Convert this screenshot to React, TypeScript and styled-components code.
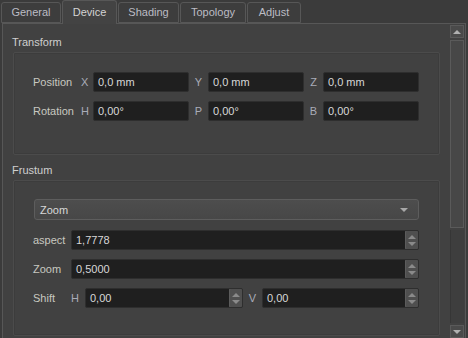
import React from "react";
import styled, { createGlobalStyle } from "styled-components";

const GlobalStyle = createGlobalStyle`
  html, body {
    margin: 0;
    padding: 0;
    background: #3b3b3b;
  }
  body {
    font-family: "Liberation Sans", Arial, sans-serif;
    font-size: 11px;
    color: #c8c8c8;
  }
`;

const TABS = [
  { name: "General", w: 60 },
  { name: "Device", w: 55 },
  { name: "Shading", w: 61 },
  { name: "Topology", w: 66 },
  { name: "Adjust", w: 54 },
];

const Window = styled.div`
  width: 468px;
  height: 338px;
  overflow: hidden;
  background: #3b3b3b;
  display: flex;
  flex-direction: column;
`;

const TabBar = styled.div`
  display: flex;
  align-items: flex-end;
  gap: 1px;
  height: 23px;
  padding-left: 1px;
  position: relative;
  z-index: 1;
`;

const Tab = styled.div<{ $active?: boolean; $w: number }>`
  box-sizing: border-box;
  width: ${p => p.$w}px;
  height: ${p => (p.$active ? 24 : 21)}px;
  padding-top: ${p => (p.$active ? 5 : 3)}px;
  text-align: center;
  border: 1px solid #575757;
  border-bottom: ${p => (p.$active ? "none" : "1px solid #575757")};
  border-radius: 3px 3px 0 0;
  background: ${p => (p.$active ? "#434343" : "#3d3d3d")};
  color: ${p => (p.$active ? "#d4d4d4" : "#bcbcc4")};
  margin-bottom: ${p => (p.$active ? -1 : 0)}px;
`;

const Pane = styled.div`
  box-sizing: border-box;
  margin-left: 2px;
  width: 464px;
  flex: 1;
  border: 1px solid #575757;
  border-bottom: none;
  background: #414141;
  display: flex;
`;

const Content = styled.div`
  flex: 1;
  padding-left: 9px;
  padding-right: 10px;
`;

const SectionTitle = styled.div<{ $top: number }>`
  margin-top: ${p => p.$top}px;
  height: 13px;
  line-height: 13px;
  color: #cfcfcf;
`;

const GroupBox = styled.div<{ $padTop: number; $padBottom: number; $gap: number }>`
  box-sizing: border-box;
  margin-top: 3px;
  margin-left: 1px;
  width: 427px;
  border: 1px solid #4b4b4b;
  border-radius: 2px;
  box-shadow: inset 0 0 0 1px #3c3c3c;
  padding: ${p => p.$padTop}px 20px ${p => p.$padBottom}px 19px;
  display: flex;
  flex-direction: column;
  gap: ${p => p.$gap}px;
`;

const Row = styled.div`
  display: flex;
  align-items: center;
  height: 20px;
`;

const Label = styled.div<{ $w: number }>`
  width: ${p => p.$w}px;
  color: #c8c8c0;
  flex-shrink: 0;
`;

const Axis = styled.div<{ $w: number; $center?: boolean }>`
  width: ${p => p.$w}px;
  flex-shrink: 0;
  text-align: ${p => (p.$center ? "center" : "left")};
  color: #a9acb8;
`;

const Field = styled.div<{ $w?: number }>`
  box-sizing: border-box;
  height: 20px;
  width: ${p => (p.$w ? `${p.$w}px` : "auto")};
  flex: ${p => (p.$w ? "none" : 1)};
  background: #1f1f1f;
  border: 1px solid #2e2e2e;
  border-radius: 2px;
  display: flex;
  align-items: center;
  color: #d8d8d8;
  overflow: hidden;
`;

const FieldText = styled.span`
  flex: 1;
  padding-left: 4px;
`;

const Spin = styled.div`
  box-sizing: border-box;
  width: 14px;
  height: 20px;
  margin-right: -1px;
  background: #4f4f4f;
  border: 1px solid #5c5c5c;
  border-radius: 2px;
  display: flex;
  flex-direction: column;
  align-items: center;
  justify-content: center;
  gap: 3px;
`;

const Tri = styled.div<{ $up?: boolean; $c?: string }>`
  width: 0;
  height: 0;
  border-left: 4px solid transparent;
  border-right: 4px solid transparent;
  ${p =>
    p.$up
      ? `border-bottom: 4px solid ${p.$c || "#8a8a8a"};`
      : `border-top: 4px solid ${p.$c || "#8a8a8a"};`}
`;

const Combo = styled.div`
  box-sizing: border-box;
  margin-left: 1px;
  height: 21px;
  background: linear-gradient(#4d4d4d, #474747);
  border: 1px solid #5d5d5d;
  border-radius: 3px;
  display: flex;
  align-items: center;
  padding: 0 10px 0 5px;
  color: #d8d8d8;
  margin-bottom: 1px;
`;

const ComboText = styled.span`
  flex: 1;
`;

const ScrollBar = styled.div`
  width: 14px;
  margin: 1px 1px 0 0;
  display: flex;
  flex-direction: column;
  gap: 2px;
`;

const ScrollButton = styled.div`
  box-sizing: border-box;
  height: 13px;
  background: #4a4a4a;
  border: 1px solid #5a5a5a;
  display: flex;
  align-items: center;
  justify-content: center;
`;

const ScrollHandle = styled.div`
  box-sizing: border-box;
  height: 188px;
  background: #474747;
  border: 1px solid #5a5a5a;
`;

const ScrollTrack = styled.div`
  flex: 1;
  background: #3e3e3e;
  border-left: 1px solid #363636;
`;

const SpinField = ({ value, w }: { value: string; w?: number }) => (
  <Field $w={w}>
    <FieldText>{value}</FieldText>
    <Spin>
      <Tri $up />
      <Tri />
    </Spin>
  </Field>
);

const App = () => {
  return (
    <Window>
      <GlobalStyle />
      <TabBar>
        {TABS.map(t => (
          <Tab key={t.name} $w={t.w} $active={t.name === "Device"}>
            {t.name}
          </Tab>
        ))}
      </TabBar>
      <Pane>
        <Content>
          <SectionTitle $top={12}>Transform</SectionTitle>
          <GroupBox $padTop={19} $padBottom={33} $gap={9}>
            <Row>
              <Label $w={48}>Position</Label>
              <Axis $w={12}>X</Axis>
              <Field $w={96}><FieldText>0,0 mm</FieldText></Field>
              <Axis $w={19} $center>Y</Axis>
              <Field $w={96}><FieldText>0,0 mm</FieldText></Field>
              <Axis $w={19} $center>Z</Axis>
              <Field $w={96}><FieldText>0,0 mm</FieldText></Field>
            </Row>
            <Row>
              <Label $w={48}>Rotation</Label>
              <Axis $w={12}>H</Axis>
              <Field $w={96}><FieldText>0,00°</FieldText></Field>
              <Axis $w={19} $center>P</Axis>
              <Field $w={96}><FieldText>0,00°</FieldText></Field>
              <Axis $w={19} $center>B</Axis>
              <Field $w={96}><FieldText>0,00°</FieldText></Field>
            </Row>
          </GroupBox>
          <SectionTitle $top={9}>Frustum</SectionTitle>
          <GroupBox $padTop={18} $padBottom={27} $gap={9}>
            <Combo>
              <ComboText>Zoom</ComboText>
              <Tri $c="#a8a8a8" />
            </Combo>
            <Row>
              <Label $w={38}>aspect</Label>
              <SpinField value="1,7778" />
            </Row>
            <Row>
              <Label $w={38}>Zoom</Label>
              <SpinField value="0,5000" />
            </Row>
            <Row>
              <Label $w={38}>Shift</Label>
              <Axis $w={14}>H</Axis>
              <SpinField value="0,00" w={158} />
              <Axis $w={19} $center>V</Axis>
              <SpinField value="0,00" />
            </Row>
          </GroupBox>
        </Content>
        <ScrollBar>
          <ScrollButton><Tri $up $c="#b0b0b0" /></ScrollButton>
          <ScrollHandle />
          <ScrollTrack />
          <ScrollButton><Tri $c="#b0b0b0" /></ScrollButton>
        </ScrollBar>
      </Pane>
    </Window>
  );
};

export default App;
